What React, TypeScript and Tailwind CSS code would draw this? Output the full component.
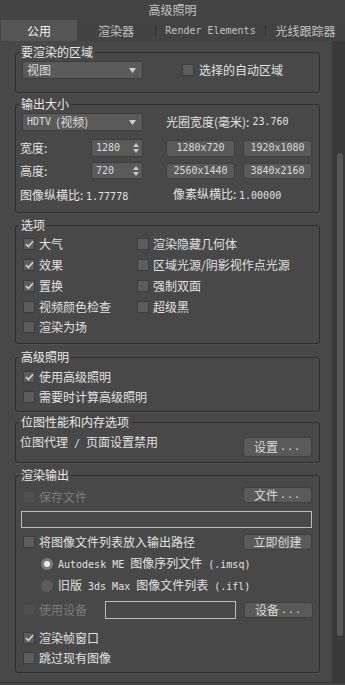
import type { ReactNode } from "react";

const mono = "font-['DejaVu_Sans_Mono','Noto_Sans_CJK_SC',monospace] text-[10px]";

function Check({ on = false, dim = false }: { on?: boolean; dim?: boolean }) {
  return (
    <span
      className={`flex h-[12px] w-[12px] shrink-0 items-center justify-center border ${
        dim ? "border-[#484848] bg-[#505050]" : "border-[#3c3c3c] bg-[#5c5c5c]"
      }`}
    >
      {on && (
        <svg width="9" height="8" viewBox="0 0 9 8">
          <path d="M1 4.2 L3.4 6.6 L8 1.2" stroke="#d2d2d2" strokeWidth="1.7" fill="none" />
        </svg>
      )}
    </span>
  );
}

function Radio({ on = false }: { on?: boolean }) {
  return (
    <span
      className={`flex h-[12px] w-[12px] shrink-0 items-center justify-center rounded-full ${
        on ? "bg-[#7a7a7a]" : "bg-[#5c5c5c]"
      }`}
    >
      {on && <span className="h-[6px] w-[6px] rounded-full bg-[#ececec]" />}
    </span>
  );
}

function Btn({ children, className = "", code = false }: { children: ReactNode; className?: string; code?: boolean }) {
  return (
    <div
      className={`flex w-[69px] shrink-0 items-center justify-center rounded-[3px] border border-[#3f3f3f] bg-[#5a5a5a] leading-none text-[#dadada] ${
        code ? mono : "text-[12px]"
      } ${className}`}
    >
      {children}
    </div>
  );
}

function Dots() {
  return <span className={`${mono} ml-[2px] tracking-[1px]`}>...</span>;
}

function Dropdown({ children }: { children: ReactNode }) {
  return (
    <div className="ml-[6px] flex h-[18px] w-[121px] shrink-0 items-center justify-between rounded-[2px] border border-[#3d3d3d] bg-[#5a5a5a] pl-[4px] pr-[6px] text-[12px] text-[#dcdcdc]">
      <span className="flex items-center">{children}</span>
      <svg width="7" height="5" viewBox="0 0 7 5">
        <path d="M0 0 H7 L3.5 5 Z" fill="#d0d0d0" />
      </svg>
    </div>
  );
}

function Spinner({ value }: { value: string }) {
  return (
    <div className="flex h-full w-[52px] shrink-0 items-center justify-between rounded-[2px] border border-[#3d3d3d] bg-[#5a5a5a] pl-[4px] pr-[3px] text-[#dcdcdc]">
      <span className={mono}>{value}</span>
      <svg width="6" height="10" viewBox="0 0 6 10">
        <path d="M0 4 L3 0 L6 4 Z M0 6 L3 10 L6 6 Z" fill="#c8c8c8" />
      </svg>
    </div>
  );
}

function Group({ title, className = "", children }: { title: string; className?: string; children: ReactNode }) {
  return (
    <div className={`relative rounded-[3px] border border-[#2d2d2d] shadow-[0_1px_0_#525252] ${className}`}>
      <span className="absolute -top-[8px] left-[3px] bg-[#484848] px-[2px] text-[12px] leading-[14px] text-[#e8e8e8]">
        {title}
      </span>
      {children}
    </div>
  );
}

function CheckRow({ label, on = false, dim = false }: { label: string; on?: boolean; dim?: boolean }) {
  return (
    <div className="flex items-center gap-[4px]">
      <Check on={on} dim={dim} />
      <span className={dim ? "text-[#7c7c7c]" : "text-[#e2e2e2]"}>{label}</span>
    </div>
  );
}

export default function App() {
  return (
    <div className="flex h-[685px] w-[345px] flex-col overflow-hidden bg-[#444444] font-['Noto_Sans_CJK_SC',sans-serif] text-[12px] leading-[14px] text-[#e2e2e2]">
      <div className="flex h-[20px] items-center justify-center text-[#c4c4c4]">高级照明</div>

      <div className="flex h-[21px] items-stretch bg-[#434343] text-[#c2c2c2]">
        <div className="ml-[1px] flex w-[76px] items-center justify-center bg-[#555555] text-[#f4f4f4]">公用</div>
        <div className="flex w-[78px] items-center justify-center">渲染器</div>
        <div className="h-[11px] w-px self-center bg-[#2f2f2f]" />
        <div className={`flex w-[109px] items-center justify-center ${mono}`}>Render Elements</div>
        <div className="h-[11px] w-px self-center bg-[#2f2f2f]" />
        <div className="flex flex-1 items-center justify-center">光线跟踪器</div>
      </div>

      <div className="flex flex-1 pb-[2px]">
        <div className="flex w-[333px] flex-col border-r border-b border-[#383838] bg-[#484848] pt-[11px] pl-[15px] pr-[12px]">
          {/* 要渲染的区域 */}
          <Group title="要渲染的区域" className="h-[41px] pt-[8px]">
            <div className="flex items-center">
              <Dropdown>视图</Dropdown>
              <span className="ml-[39px]">
                <Check />
              </span>
              <span className="ml-[5px]">选择的自动区域</span>
            </div>
          </Group>

          {/* 输出大小 */}
          <Group title="输出大小" className="mt-[11px] h-[109px] pt-[8px]">
            <div className="flex items-center">
              <Dropdown>
                <span className={mono}>HDTV</span>
                <span className="ml-[5px]">(视频)</span>
              </Dropdown>
              <span className="ml-[23px]">光圈宽度(毫米):</span>
              <span className={`${mono} ml-[3px]`}>23.760</span>
            </div>
            <div className="mt-[8px] flex h-[18px] items-center">
              <span className="w-[75px] pl-[4px]">宽度:</span>
              <Spinner value="1280" />
              <Btn code className="ml-[23px] h-[17px]">1280x720</Btn>
              <Btn code className="ml-[8px] h-[17px]">1920x1080</Btn>
            </div>
            <div className="mt-[5px] flex h-[17px] items-center">
              <span className="w-[75px] pl-[4px]">高度:</span>
              <Spinner value="720" />
              <Btn code className="ml-[23px] h-[16px]">2560x1440</Btn>
              <Btn code className="ml-[8px] h-[16px]">3840x2160</Btn>
            </div>
            <div className="mt-[9px] flex items-center">
              <span className="w-[157px] pl-[4px]">
                图像纵横比: <span className={mono}>1.77778</span>
              </span>
              <span className="-mt-[3px]">
                像素纵横比: <span className={mono}>1.00000</span>
              </span>
            </div>
          </Group>

          {/* 选项 */}
          <Group title="选项" className="mt-[12px] h-[119px] pt-[8px]">
            <div className="grid grid-cols-[121px_1fr] auto-rows-[20.75px] items-center">
              <div className="pl-[7px]"><CheckRow label="大气" on /></div>
              <CheckRow label="渲染隐藏几何体" />
              <div className="pl-[7px]"><CheckRow label="效果" on /></div>
              <CheckRow label="区域光源/阴影视作点光源" />
              <div className="pl-[7px]"><CheckRow label="置换" on /></div>
              <CheckRow label="强制双面" />
              <div className="pl-[7px]"><CheckRow label="视频颜色检查" /></div>
              <CheckRow label="超级黑" />
              <div className="pl-[7px]"><CheckRow label="渲染为场" /></div>
            </div>
          </Group>

          {/* 高级照明 */}
          <Group title="高级照明" className="mt-[13px] h-[55px] pt-[9px] pl-[7px]">
            <div className="flex h-[20px] items-center"><CheckRow label="使用高级照明" on /></div>
            <div className="flex h-[20px] items-center"><CheckRow label="需要时计算高级照明" /></div>
          </Group>

          {/* 位图性能和内存选项 */}
          <Group title="位图性能和内存选项" className="mt-[10px] h-[41px] pt-[14px]">
            <div className="flex h-[20px] items-center justify-between pr-[7px]">
              <span className="mb-[8px] pl-[4px]">
                位图代理<span className={`${mono} whitespace-pre`}> / </span>页面设置禁用
              </span>
              <Btn className="h-[20px] text-[#d0d0d0]">
                设置<Dots />
              </Btn>
            </div>
          </Group>

          {/* 渲染输出 */}
          <Group title="渲染输出" className="mt-[12px] h-[198px] pt-[11px]">
            <div className="flex h-[16px] items-center justify-between pr-[7px] pl-[7px]">
              <span className="mt-[4px]"><CheckRow label="保存文件" dim /></span>
              <Btn className="h-[16px]">
                文件<Dots />
              </Btn>
            </div>
            <div className="mt-[8px] ml-[5px] h-[17px] w-[291px] border border-[#bdbdbd] bg-[#484848]" />
            <div className="mt-[6px] flex h-[16px] items-center justify-between pr-[7px] pl-[7px]">
              <CheckRow label="将图像文件列表放入输出路径" />
              <Btn className="h-[16px]">立即创建</Btn>
            </div>
            <div className="mt-[5px] flex h-[18px] items-center gap-[5px] pl-[25px]">
              <Radio on />
              <span>
                <span className={mono}>Autodesk ME </span>图像序列文件<span className={mono}> (.imsq)</span>
              </span>
            </div>
            <div className="mt-[4px] flex h-[18px] items-center gap-[5px] pl-[25px]">
              <Radio />
              <span>
                旧版<span className={mono}> 3ds Max </span>图像文件列表<span className={mono}> (.ifl)</span>
              </span>
            </div>
            <div className="mt-[6px] flex h-[18px] items-center pl-[7px]">
              <span className="w-[82px]"><CheckRow label="使用设备" dim /></span>
              <div className="h-[18px] w-[131px] border border-[#bdbdbd] bg-[#484848]" />
              <Btn className="ml-[8px] h-[16px] text-[#d0d0d0]">
                设备<Dots />
              </Btn>
            </div>
            <div className="mt-[10px] flex h-[18px] items-center pl-[7px]">
              <CheckRow label="渲染帧窗口" on />
            </div>
            <div className="mt-[2px] flex h-[18px] items-center pl-[7px]">
              <CheckRow label="跳过现有图像" />
            </div>
          </Group>
        </div>

        <div className="flex w-[12px] flex-col bg-[#393939]">
          <div className="mt-[112px] ml-[4px] h-[483px] w-[6px] rounded-[3px] bg-[#575757]" />
        </div>
      </div>
    </div>
  );
}
